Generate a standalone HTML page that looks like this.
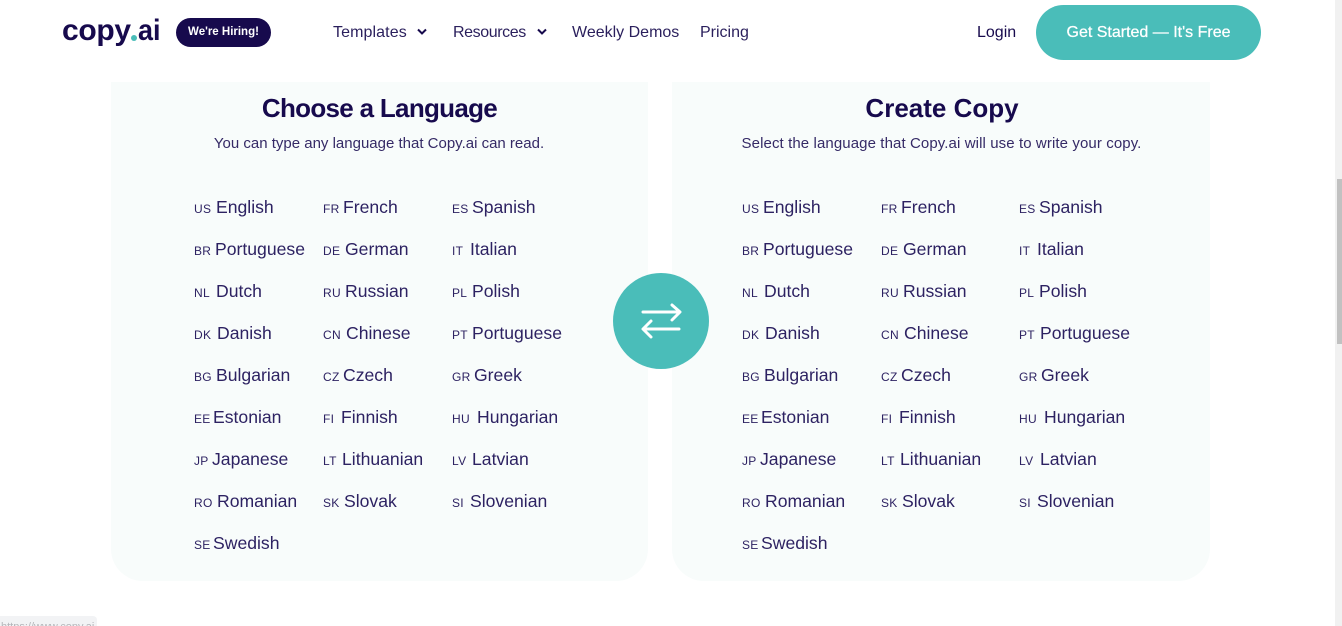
<!DOCTYPE html>
<html><head><meta charset="utf-8"><title>Copy.ai</title>
<style>
*{box-sizing:border-box}
html,body{margin:0;padding:0;width:1342px;height:626px;overflow:hidden;background:#fff;font-family:"Liberation Sans",sans-serif;color:#170a4d}
.a{position:absolute;white-space:nowrap}
.card{position:absolute;top:82px;height:499px;background:#f8fcfb;border-radius:0 0 32px 32px}
.nav{position:absolute;top:23px;line-height:20px;font-size:16px;color:#2a1f5c;white-space:nowrap}
.h{position:absolute;top:92px;font-size:26px;line-height:32px;font-weight:700;color:#170a4d;text-align:center;white-space:nowrap}
.s{position:absolute;top:135px;font-size:15px;line-height:18px;color:#352a66;text-align:center;white-space:nowrap}
.c{position:absolute;height:22px;line-height:22px;font-size:17.6px;color:#2d2262;white-space:nowrap}
.c i{display:inline-block;font-style:normal;font-size:12px;letter-spacing:.3px;color:#2d2262}
</style></head><body>

<div class="card" style="left:111px;width:537px"></div>
<div class="card" style="left:672px;width:538px"></div>

<div class="a" style="left:62px;top:13px;font-size:30px;line-height:36px;font-weight:700;color:#170a4d;letter-spacing:-.3px">copy</div>
<div class="a" style="left:131px;top:35px;width:6px;height:6px;border-radius:50%;background:#4abdb9;color:transparent;font-size:6px;line-height:6px;overflow:hidden">.</div>
<div class="a" style="left:138px;top:13px;font-size:30px;line-height:36px;font-weight:700;color:#170a4d;transform:scaleX(.9);transform-origin:left center">ai</div>
<div class="a" style="left:176px;top:18px;width:95px;height:29px;border-radius:15px;background:#170a4d;color:#fff;font-size:11.5px;font-weight:700;line-height:28px;text-align:center">We're Hiring!</div>

<div class="nav" style="left:333px;letter-spacing:.1px">Templates</div>
<svg class="a" style="left:416px;top:27px" width="12" height="10" viewBox="0 0 12 10"><path d="M2 2.5L6 6.5L10 2.5" fill="none" stroke="#170a4d" stroke-width="2"/></svg>
<div class="nav" style="left:453px;letter-spacing:-.4px">Resources</div>
<svg class="a" style="left:536px;top:27px" width="12" height="10" viewBox="0 0 12 10"><path d="M2 2.5L6 6.5L10 2.5" fill="none" stroke="#170a4d" stroke-width="2"/></svg>
<div class="nav" style="left:572px">Weekly Demos</div>
<div class="nav" style="left:700px">Pricing</div>
<div class="nav" style="left:977px;color:#170a4d">Login</div>
<div class="a" style="left:1036px;top:5px;width:225px;height:55px;border-radius:28px;background:#4abdb9;color:#fff;font-size:16px;font-weight:400;line-height:56px;text-align:center;-webkit-text-stroke:.25px #fff">Get Started — It's Free</div>

<div class="h" style="left:111px;width:537px;letter-spacing:-.7px">Choose a Language</div>
<div class="s" style="left:111px;width:536px">You can type any language that Copy.ai can read.</div>
<div class="h" style="left:672px;width:540px">Create Copy</div>
<div class="s" style="left:672px;width:539px;letter-spacing:.1px">Select the language that Copy.ai will use to write your copy.</div>

<!-- left -->
<div class="c" style="left:194px;top:196px"><i style="width:22px">US</i>English</div>
<div class="c" style="left:323px;top:196px"><i style="width:20px">FR</i>French</div>
<div class="c" style="left:452px;top:196px"><i style="width:20px">ES</i>Spanish</div>
<div class="c" style="left:194px;top:238px"><i style="width:21px">BR</i>Portuguese</div>
<div class="c" style="left:323px;top:238px"><i style="width:22px">DE</i>German</div>
<div class="c" style="left:452px;top:238px"><i style="width:18px">IT</i>Italian</div>
<div class="c" style="left:194px;top:280px"><i style="width:22px">NL</i>Dutch</div>
<div class="c" style="left:323px;top:280px"><i style="width:22px">RU</i>Russian</div>
<div class="c" style="left:452px;top:280px"><i style="width:20px">PL</i>Polish</div>
<div class="c" style="left:194px;top:322px"><i style="width:23px">DK</i>Danish</div>
<div class="c" style="left:323px;top:322px"><i style="width:23px">CN</i>Chinese</div>
<div class="c" style="left:452px;top:322px"><i style="width:20px">PT</i>Portuguese</div>
<div class="c" style="left:194px;top:364px"><i style="width:22px">BG</i>Bulgarian</div>
<div class="c" style="left:323px;top:364px"><i style="width:20px">CZ</i>Czech</div>
<div class="c" style="left:452px;top:364px"><i style="width:22px">GR</i>Greek</div>
<div class="c" style="left:194px;top:406px"><i style="width:19px">EE</i>Estonian</div>
<div class="c" style="left:323px;top:406px"><i style="width:18px">FI</i>Finnish</div>
<div class="c" style="left:452px;top:406px"><i style="width:25px">HU</i>Hungarian</div>
<div class="c" style="left:194px;top:448px"><i style="width:18px">JP</i>Japanese</div>
<div class="c" style="left:323px;top:448px"><i style="width:19px">LT</i>Lithuanian</div>
<div class="c" style="left:452px;top:448px"><i style="width:20px">LV</i>Latvian</div>
<div class="c" style="left:194px;top:490px"><i style="width:23px">RO</i>Romanian</div>
<div class="c" style="left:323px;top:490px"><i style="width:21px">SK</i>Slovak</div>
<div class="c" style="left:452px;top:490px"><i style="width:18px">SI</i>Slovenian</div>
<div class="c" style="left:194px;top:532px"><i style="width:19px">SE</i>Swedish</div>

<!-- right -->
<div class="c" style="left:742px;top:196px"><i style="width:21px">US</i>English</div>
<div class="c" style="left:881px;top:196px"><i style="width:20px">FR</i>French</div>
<div class="c" style="left:1019px;top:196px"><i style="width:20px">ES</i>Spanish</div>
<div class="c" style="left:742px;top:238px"><i style="width:21px">BR</i>Portuguese</div>
<div class="c" style="left:881px;top:238px"><i style="width:22px">DE</i>German</div>
<div class="c" style="left:1019px;top:238px"><i style="width:18px">IT</i>Italian</div>
<div class="c" style="left:742px;top:280px"><i style="width:22px">NL</i>Dutch</div>
<div class="c" style="left:881px;top:280px"><i style="width:22px">RU</i>Russian</div>
<div class="c" style="left:1019px;top:280px"><i style="width:20px">PL</i>Polish</div>
<div class="c" style="left:742px;top:322px"><i style="width:23px">DK</i>Danish</div>
<div class="c" style="left:881px;top:322px"><i style="width:23px">CN</i>Chinese</div>
<div class="c" style="left:1019px;top:322px"><i style="width:21px">PT</i>Portuguese</div>
<div class="c" style="left:742px;top:364px"><i style="width:22px">BG</i>Bulgarian</div>
<div class="c" style="left:881px;top:364px"><i style="width:20px">CZ</i>Czech</div>
<div class="c" style="left:1019px;top:364px"><i style="width:22px">GR</i>Greek</div>
<div class="c" style="left:742px;top:406px"><i style="width:19px">EE</i>Estonian</div>
<div class="c" style="left:881px;top:406px"><i style="width:18px">FI</i>Finnish</div>
<div class="c" style="left:1019px;top:406px"><i style="width:25px">HU</i>Hungarian</div>
<div class="c" style="left:742px;top:448px"><i style="width:18px">JP</i>Japanese</div>
<div class="c" style="left:881px;top:448px"><i style="width:19px">LT</i>Lithuanian</div>
<div class="c" style="left:1019px;top:448px"><i style="width:21px">LV</i>Latvian</div>
<div class="c" style="left:742px;top:490px"><i style="width:23px">RO</i>Romanian</div>
<div class="c" style="left:881px;top:490px"><i style="width:21px">SK</i>Slovak</div>
<div class="c" style="left:1019px;top:490px"><i style="width:18px">SI</i>Slovenian</div>
<div class="c" style="left:742px;top:532px"><i style="width:19px">SE</i>Swedish</div>

<!-- swap button -->
<svg class="a" style="left:613px;top:273px" width="96" height="96" viewBox="0 0 96 96">
<circle cx="48" cy="48" r="48" fill="#4abdb9"/>
<path d="M30 39H66M59 32L67 39L59 47M66 56H31M38 48L30 56L38 64" fill="none" stroke="#fff" stroke-width="3" stroke-linecap="round" stroke-linejoin="round"/>
</svg>

<!-- status bubble -->
<div class="a" style="left:0;top:616px;width:97px;height:10px;background:#f2f3f5;border-radius:0 4px 0 0;overflow:hidden;font-size:11px;line-height:22px;color:#b4b6ba;padding-left:1px">https://www.copy.ai</div>

<!-- scrollbar -->
<div class="a" style="left:1335px;top:0;width:7px;height:626px;background:#f1f1f1"></div>
<div class="a" style="left:1337px;top:179px;width:5px;height:165px;background:#c1c1c1"></div>
</body></html>
